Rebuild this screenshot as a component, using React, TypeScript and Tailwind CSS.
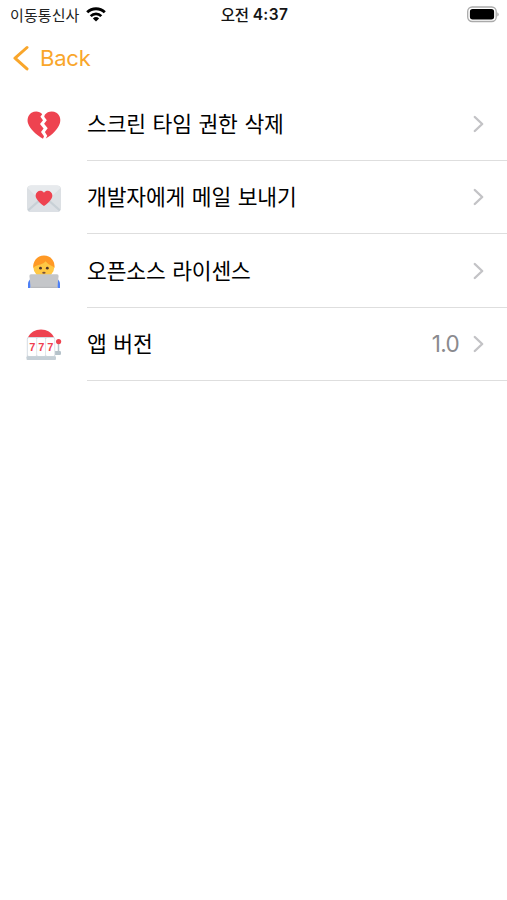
import type { ReactNode } from "react";

const korean = "font-['Noto_Sans_CJK_KR',sans-serif]";

function BrokenHeart() {
  return (
    <svg width="36" height="36" viewBox="0 0 36 36">
      <path
        fill="#ee4350"
        d="M16.2 7.2C13.8 4 9 3.6 5.5 5.8 1.8 8.3.8 12.7 2.2 16.8 4 22.1 10.2 28.1 17 31.7L18 29.2 15 25 17.6 21.4 14 16.9 17 13.2 14.4 9.8Z"
      />
      <path
        fill="#ee4350"
        d="M18.8 7.8C21.3 4.5 26.4 3.4 30.4 5.8 34.2 8.3 35.1 12.7 33.7 16.8 31.9 22.1 26.3 28.1 19.8 31.5L21.2 28.8 18.9 25.1 21.7 21.2 18.1 16.8 20.8 13.2 18.2 9.8Z"
      />
    </svg>
  );
}

function LoveLetter() {
  return (
    <svg width="36" height="36" viewBox="0 0 36 36">
      <rect x="1" y="4.5" width="34" height="26.5" rx="4" fill="#dce0e4" />
      <path fill="#c8d0d6" d="M1.5 28.5 14 17.5h8l12.5 11C33.8 30 32.5 31 31 31H5c-1.5 0-2.8-1-3.5-2.5Z" />
      <path fill="#dce0e5" d="M2.5 30.5 15 19.5q3-2.2 6 0l12.5 11Q32.5 31 31 31H5q-1.5 0-2.5-.5Z" />
      <path fill="#e7eaed" d="M1.5 7C2.2 5.5 3.5 4.5 5 4.5h26c1.5 0 2.8 1 3.5 2.5L21 20q-3 2.5-6 0Z" />
      <path
        fill="#ee4350"
        d="M18 11.8c-1.6-2.3-4.7-2.6-6.7-.9-2.1 1.8-2.1 4.5-.7 6.9 1.6 2.8 4.5 5.3 7.4 7.2 2.9-1.9 5.8-4.4 7.4-7.2 1.4-2.4 1.4-5.1-.7-6.9-2-1.7-5.1-1.4-6.7.9Z"
      />
    </svg>
  );
}

function Technologist() {
  return (
    <svg width="36" height="36" viewBox="0 0 36 36">
      <path fill="#4c7ff5" d="M2 34v-4c0-4 4-7 8-7h16c4 0 8 3 8 7v4Z" />
      <circle cx="17.8" cy="13" r="10.5" fill="#ffc845" />
      <path
        fill="#ff9925"
        d="M7.400 14C6.600 7.500 11 1.500 18 1.500c6.800 0 11.200 5.500 10.500 12.500-.500-.9-1.600-1.600-3.100-2.200-2.700-1.100-4.300-2.600-5.800-4.500-2.200 3.300-7.600 3.400-10.300 4.900-.8.500-1.500 1-1.900 1.800Z"
      />
      <circle cx="14.5" cy="14.2" r="1.4" fill="#503329" />
      <circle cx="21.3" cy="14.2" r="1.4" fill="#503329" />
      <ellipse cx="17.900" cy="18.800" rx="1.700" ry="1" fill="#79513a" />
      <path fill="#fff" d="M5.200 22h25.600L31.300 34H4.700Z" />
      <path fill="#c4c6c9" d="M5 20.3h26q1.700 0 1.600 1.700L31.300 34H4.700L3.400 22q-.1-1.700 1.600-1.700Z" />
      <path fill="#b7b9bc" d="M4.700 32.8h26.600V34H4.700z" />
    </svg>
  );
}

function SlotMachine() {
  return (
    <svg width="36" height="36" viewBox="0 0 36 36">
      <path stroke="#b7c2ca" strokeWidth="1.5" d="M32.5 15v12" />
      <rect x="28" y="24" width="7" height="4" rx="1.2" fill="#b5c2ca" />
      <circle cx="32.6" cy="14.6" r="2.6" fill="#ee4350" />
      <path fill="#ee4350" d="M1.800 10.800C4.500 5.300 9 2.600 15 2.600s10.500 2.700 13.200 8.200Z" />
      <rect x=".8" y="10" width="28.400" height="22.500" rx="2" fill="#d5dce2" />
      <rect x="1.8" y="11" width="8.6" height="18" rx="1.200" fill="#fff" />
      <rect x="11.1" y="11" width="8.200" height="18" rx="1.200" fill="#fff" />
      <rect x="20" y="11" width="8.400" height="18" rx="1.200" fill="#fff" />
      <rect x=".5" y="29.300" width="29.5" height="3.6" rx="1" fill="#c5cfd6" />
      <g fill="#ef3f50" fontFamily="Liberation Sans, sans-serif" fontSize="11" fontWeight="700" textAnchor="middle">
        <text x="6.2" y="24">7</text>
        <text x="15.3" y="24">7</text>
        <text x="24.4" y="24">7</text>
      </g>
    </svg>
  );
}

function Row({ icon, label, value }: { icon: ReactNode; label: string; value?: string }) {
  return (
    <li className="flex h-[73.4px] pl-[26px]">
      <span className="flex w-[61px] shrink-0 items-center pt-[2px]">{icon}</span>
      <div className="flex flex-1 items-center border-b border-[#dedede] pr-[23px]">
        <span
          className={`${korean} flex-1 pb-[2px] text-[21.5px] leading-none tracking-[-0.15px] whitespace-nowrap text-black [word-spacing:2px]`}
        >
          {label}
        </span>
        {value && (
          <span className="mr-[14px] font-[Inter,sans-serif] text-[22.5px] leading-none tracking-[-0.7px] text-[#8a8a8e]">
            {value}
          </span>
        )}
        <svg width="11" height="18" viewBox="0 0 11 18" fill="none">
          <path d="m1.8 2 7.4 7-7.4 7" stroke="#c3c3c6" strokeWidth="2.4" strokeLinecap="round" strokeLinejoin="round" />
        </svg>
      </div>
    </li>
  );
}

export default function App() {
  return (
    <div className="min-h-[900px] w-full overflow-hidden bg-white">
      <header className="grid h-[29px] grid-cols-3 items-center pr-[8px] pl-[10px]">
        <div className="flex items-center gap-[6px]">
          <span className={`${korean} pb-px text-[15px] leading-none tracking-[0.1px] whitespace-nowrap text-[#222]`}>
            이동통신사
          </span>
          <svg width="20" height="15" viewBox="0 0 20 15">
            <path d="M1.2 5.3a12.7 12.7 0 0 1 17.6 0" fill="none" stroke="#000" strokeWidth="2.9" />
            <path d="M4.7 9.1a7.5 7.5 0 0 1 10.6 0" fill="none" stroke="#000" strokeWidth="2.7" />
            <path d="M6.9 11.4a4.5 4.5 0 0 1 6.2 0L10 14.5Z" />
          </svg>
        </div>
        <div className="flex items-center justify-center gap-[4px] text-[#151515]">
          <span className={`${korean} text-[15.5px] leading-none font-medium tracking-[-0.3px]`}>오전</span>
          <span className="pt-px font-[Inter,sans-serif] text-[15.5px] leading-none font-semibold tracking-[0.4px]">
            4:37
          </span>
        </div>
        <svg className="justify-self-end" width="33" height="17" viewBox="0 0 33 17">
          <rect x="1.7" y="1" width="28.5" height="14.5" rx="4.5" fill="#fff" stroke="#aaa" strokeWidth="1.3" />
          <rect x="3.9" y="3.1" width="24.2" height="10.3" rx="2.7" />
          <path d="M31.3 6.2q1.4.8 1.4 2.2T31.3 10.6Z" fill="#aaa" />
        </svg>
      </header>
      <nav className="flex h-[58px] items-center gap-[10px] pl-[13px] text-[#f9a62b]">
        <svg width="17" height="27" viewBox="0 0 17 27" fill="none">
          <path d="M14 2.5 2 13.2l12 10.7" stroke="currentColor" strokeWidth="3" strokeLinecap="round" strokeLinejoin="round" />
        </svg>
        <span className="font-[Inter,sans-serif] text-[22px] leading-none tracking-[-0.2px]">Back</span>
      </nav>
      <ul className="pt-[0.6px]">
        <Row icon={<BrokenHeart />} label="스크린 타임 권한 삭제" />
        <Row icon={<LoveLetter />} label="개발자에게 메일 보내기" />
        <Row icon={<Technologist />} label="오픈소스 라이센스" />
        <Row icon={<SlotMachine />} label="앱 버전" value="1.0" />
      </ul>
    </div>
  );
}
